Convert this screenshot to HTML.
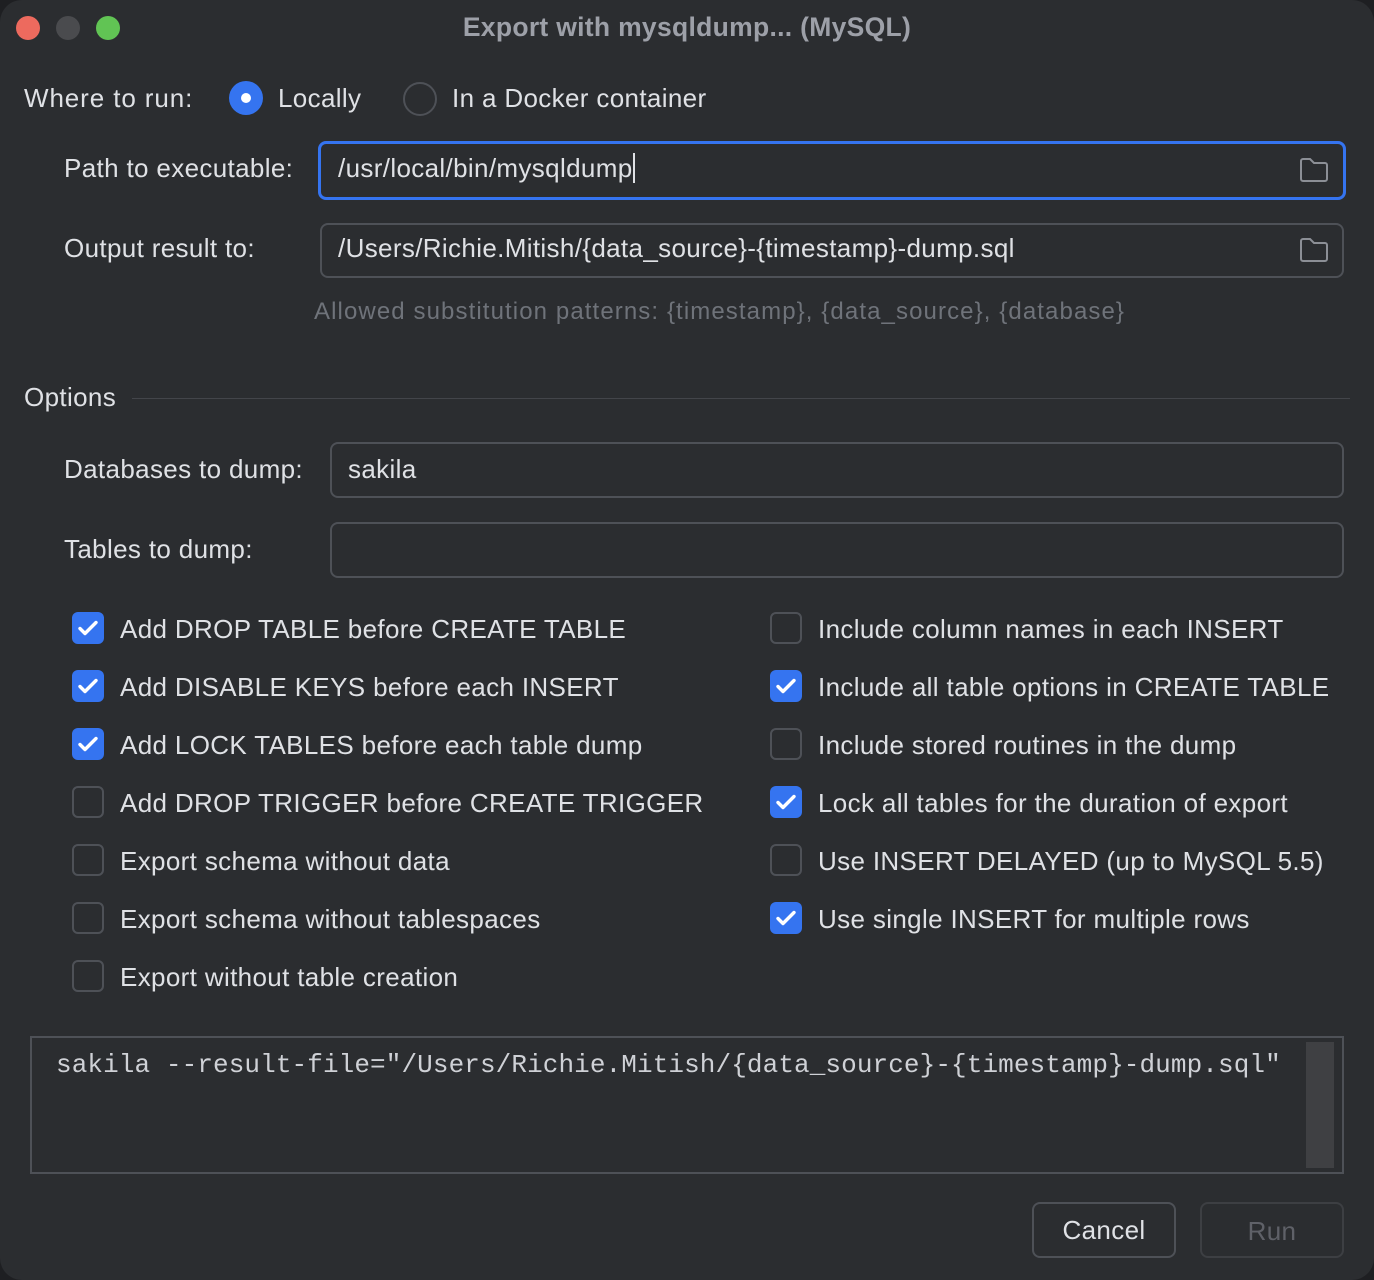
<!DOCTYPE html>
<html><head><meta charset="utf-8"><style>
html,body{margin:0;padding:0;width:1374px;height:1280px;overflow:hidden;background:#1e1f22}
.win{position:absolute;left:0;top:0;width:1374px;height:1280px;background:#2b2d30;border-radius:22px;overflow:hidden;font-family:"Liberation Sans",sans-serif;color:#dfe1e5;font-size:26px;letter-spacing:0.35px}
.a{position:absolute;white-space:nowrap}
.dot{position:absolute;top:16px;width:24px;height:24px;border-radius:50%}
.field{position:absolute;border:2px solid #4e5157;border-radius:8px;box-sizing:border-box;background:#2b2d30}
.cb{position:absolute;width:32px;height:32px;border-radius:6px;box-sizing:border-box;border:2px solid #4e5157}
.cb.on{background:#3574f0;border:none}
.cb.on svg{position:absolute;left:0;top:0}
.lbl{position:absolute;white-space:nowrap;line-height:32px}
</style></head><body><div class="win">
<div class="dot" style="left:16px;background:#ed6a5e"></div>
<div class="dot" style="left:56px;background:#4a4b4e"></div>
<div class="dot" style="left:96px;background:#61c454"></div>
<div class="a" style="left:0;width:1374px;text-align:center;top:12px;font-weight:bold;color:#9da0a8;font-size:26.5px;letter-spacing:0.3px">Export with mysqldump... (MySQL)</div>

<div class="a" style="left:24px;top:83px;letter-spacing:0.9px">Where to run:</div>
<div class="a" style="left:229px;top:81px;width:34px;height:34px;border-radius:50%;background:#3574f0"><div style="position:absolute;left:12px;top:12px;width:10px;height:10px;border-radius:50%;background:#fff"></div></div>
<div class="a" style="left:278px;top:83px">Locally</div>
<div class="a" style="left:403px;top:82px;width:30px;height:30px;border-radius:50%;border:2px solid #4e5157"></div>
<div class="a" style="left:452px;top:83px">In a Docker container</div>

<div class="a" style="left:64px;top:153px">Path to executable:</div>
<div class="field" style="left:318px;top:141px;width:1028px;height:59px;border:3px solid #3574f0"></div>
<div class="a" style="left:338px;top:153px">/usr/local/bin/mysqldump<span style="display:inline-block;width:2px;height:30px;background:#dfe1e5;vertical-align:-6px"></span></div>
<svg class="a" style="left:1298px;top:156px" width="32" height="28" viewBox="0 0 32 28"><path d="M3 5a2 2 0 0 1 2-2h7l4 4h11a2 2 0 0 1 2 2v14a2 2 0 0 1-2 2H5a2 2 0 0 1-2-2z" fill="none" stroke="#8c8f96" stroke-width="2"/></svg>

<div class="a" style="left:64px;top:233px">Output result to:</div>
<div class="field" style="left:320px;top:223px;width:1024px;height:55px"></div>
<div class="a" style="left:338px;top:233px">/Users/Richie.Mitish/{data_source}-{timestamp}-dump.sql</div>
<svg class="a" style="left:1298px;top:236px" width="32" height="28" viewBox="0 0 32 28"><path d="M3 5a2 2 0 0 1 2-2h7l4 4h11a2 2 0 0 1 2 2v14a2 2 0 0 1-2 2H5a2 2 0 0 1-2-2z" fill="none" stroke="#8c8f96" stroke-width="2"/></svg>
<div class="a" style="left:314px;top:298px;color:#6f737a;font-size:24px;letter-spacing:1.1px">Allowed substitution patterns: {timestamp}, {data_source}, {database}</div>

<div class="a" style="left:24px;top:382px">Options</div>
<div class="a" style="left:132px;top:398px;width:1218px;height:1px;background:#43454a"></div>

<div class="a" style="left:64px;top:454px">Databases to dump:</div>
<div class="field" style="left:330px;top:442px;width:1014px;height:56px"></div>
<div class="a" style="left:348px;top:454px">sakila</div>
<div class="a" style="left:64px;top:534px">Tables to dump:</div>
<div class="field" style="left:330px;top:522px;width:1014px;height:56px"></div>

<div id="cbs"></div>
<script>
var L=[[1,"Add DROP TABLE before CREATE TABLE"],[1,"Add DISABLE KEYS before each INSERT"],[1,"Add LOCK TABLES before each table dump"],[0,"Add DROP TRIGGER before CREATE TRIGGER"],[0,"Export schema without data"],[0,"Export schema without tablespaces"],[0,"Export without table creation"]];
var R=[[0,"Include column names in each INSERT"],[1,"Include all table options in CREATE TABLE"],[0,"Include stored routines in the dump"],[1,"Lock all tables for the duration of export"],[0,"Use INSERT DELAYED (up to MySQL 5.5)"],[1,"Use single INSERT for multiple rows"]];
var h="";var ck='<svg width="32" height="32" viewBox="0 0 32 32"><path d="M8 16.5l5 5 11-11" fill="none" stroke="#fff" stroke-width="3.4" stroke-linecap="round" stroke-linejoin="round"/></svg>';
function row(a,x,tx){a.forEach(function(r,i){var y=612+i*58;h+='<div class="cb'+(r[0]?' on':'')+'" style="left:'+x+'px;top:'+y+'px">'+(r[0]?ck:'')+'</div><div class="lbl" style="left:'+tx+'px;top:'+(y+1)+'px">'+r[1]+'</div>';});}
row(L,72,120);row(R,770,818);
document.getElementById("cbs").innerHTML=h;
</script>

<div class="a" style="left:30px;top:1036px;width:1314px;height:138px;border:2px solid #4e5157;box-sizing:border-box;background:#2b2d30"></div>
<div class="a" style="left:1306px;top:1042px;width:28px;height:126px;background:#3f4043"></div>
<div class="a" style="left:56px;top:1050px;font-family:'Liberation Mono',monospace;font-size:26px;letter-spacing:0.1px;color:#cfd1d6">sakila --result-file="/Users/Richie.Mitish/{data_source}-{timestamp}-dump.sql"</div>

<div class="a" style="left:1032px;top:1202px;width:144px;height:56px;border:2px solid #4e5157;border-radius:8px;box-sizing:border-box;text-align:center;line-height:52px">Cancel</div>
<div class="a" style="left:1200px;top:1202px;width:144px;height:56px;border:2px solid #3d3f43;border-radius:8px;box-sizing:border-box;text-align:center;line-height:54px;color:#5f6168">Run</div>
</div></body></html>
